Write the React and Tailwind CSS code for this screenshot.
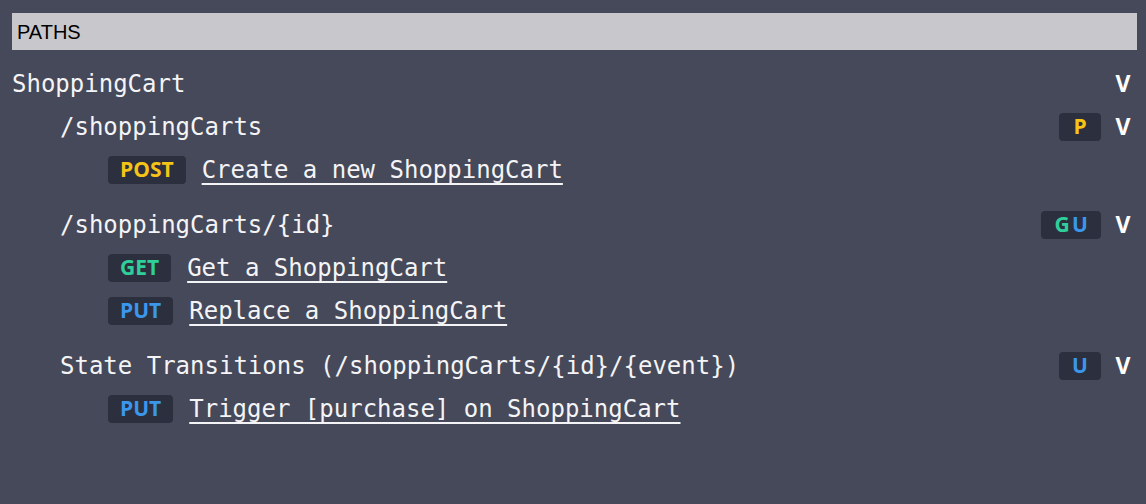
import React from "react";

const mono = { fontFamily: '"DejaVu Sans Mono", "Liberation Mono", monospace' };

const colors = {
  P: "text-[#f6c416]",
  G: "text-[#2fcf9b]",
  U: "text-[#3b97eb]",
};

function Method({ m }) {
  const c = m === "POST" ? colors.P : m === "GET" ? colors.G : colors.U;
  return (
    <span
      className={`inline-flex h-[28px] items-center rounded-[4px] bg-[#2c2f3d] px-3 text-[21px] font-bold leading-none ${c}`}
      style={{ fontFamily: '"Open Sans", sans-serif' }}
    >
      {m}
    </span>
  );
}

function Letters({ letters }) {
  return (
    <span
      className="inline-flex h-[28px] items-center rounded-[4px] bg-[#2c2f3d] px-3 text-[21px] font-bold leading-none"
      style={{ fontFamily: '"Open Sans", sans-serif' }}
    >
      {letters.map((l) => (
        <span key={l} className={`w-[18px] text-center ${colors[l]}`}>
          {l}
        </span>
      ))}
    </span>
  );
}

function Chevron() {
  return (
    <span
      className="w-[18px] text-center text-[23px] font-bold leading-none text-white"
      style={{ fontFamily: '"Open Sans", sans-serif' }}
    >
      V
    </span>
  );
}

function PathRow({ label, letters }) {
  return (
    <div className="flex h-[43px] items-center pl-[48px]">
      <span className="flex-1 text-[24px] text-[#f4f4f6]" style={mono}>
        {label}
      </span>
      <div className="flex items-center gap-[13px]">
        <Letters letters={letters} />
        <Chevron />
      </div>
    </div>
  );
}

function OpRow({ m, label }) {
  return (
    <div className="flex h-[43px] items-center gap-4 pl-[96px]">
      <Method m={m} />
      <a
        href="#"
        className="text-[24px] text-[#f4f4f6] underline decoration-[2px] underline-offset-[5px] [text-decoration-skip-ink:none]"
        style={mono}
      >
        {label}
      </a>
    </div>
  );
}

export default function App() {
  return (
    <div className="min-h-[504px] w-full bg-[#464959] pl-3 pr-[9px] pt-[13px]">
      <div
        className="flex h-[37px] items-center bg-[#c8c8cc] px-[5px] text-[20px] text-black"
        style={{ fontFamily: '"Liberation Sans", Arial, sans-serif' }}
      >
        PATHS
      </div>
      <div className="mt-3 pr-[5px]">
        <div className="flex h-[43px] items-center">
          <span className="flex-1 text-[24px] text-[#f4f4f6]" style={mono}>
            ShoppingCart
          </span>
          <Chevron />
        </div>
        <PathRow label="/shoppingCarts" letters={["P"]} />
        <OpRow m="POST" label="Create a new ShoppingCart" />
        <div className="h-3" />
        <PathRow label="/shoppingCarts/{id}" letters={["G", "U"]} />
        <OpRow m="GET" label="Get a ShoppingCart" />
        <OpRow m="PUT" label="Replace a ShoppingCart" />
        <div className="h-3" />
        <PathRow label="State Transitions (/shoppingCarts/{id}/{event})" letters={["U"]} />
        <OpRow m="PUT" label="Trigger [purchase] on ShoppingCart" />
      </div>
    </div>
  );
}
